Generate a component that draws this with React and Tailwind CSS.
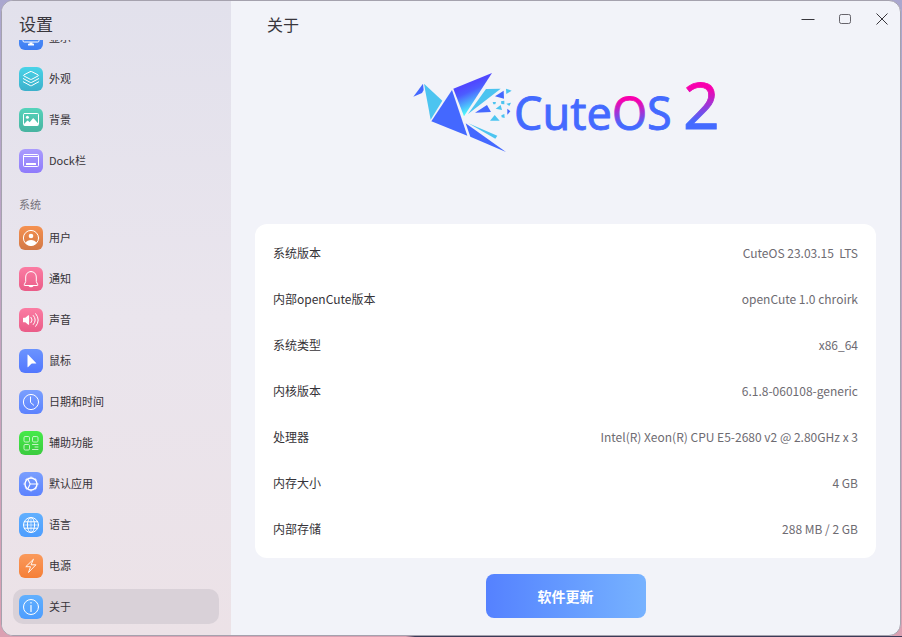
import React from "react";

const stroke = {
  fill: "none",
  stroke: "white",
  strokeWidth: 1,
  strokeLinecap: "round",
  strokeLinejoin: "round",
};

const glyphs = {
  display: (
    <g>
      <rect x="4" y="4" width="16" height="12" rx="1.2" {...stroke} />
      <path d="M10.5 16.5h3v1.3h1.5v1.6H9v-1.600h1.5z" fill="white" />
    </g>
  ),
  layers: (
    <g {...stroke}>
      <path d="M11.3 4.6 4.9 7.9q-.9.5 0 1l6.4 3.4q.7.4 1.4 0l6.4-3.4q.9-.5 0-1l-6.4-3.3q-.7-.4-1.4 0Z" />
      <path d="m4.3 11.6 7 3.8q.7.4 1.4 0l7-3.8" />
      <path d="m4.3 14.8 7 3.8q.7.4 1.4 0l7-3.8" />
    </g>
  ),
  picture: (
    <g>
      <rect x="4.5" y="5.5" width="15" height="12" rx="1" {...stroke} />
      <circle cx="8.4" cy="9.3" r="1.5" fill="white" />
      <path d="m5 16 3.2-3.2q.5-.5 1 0l1.4 1.5 3.2-3.7q.5-.5 1 0L19 15.3V17.5H5z" fill="white" />
    </g>
  ),
  dock: (
    <g>
      <rect x="4.5" y="5.5" width="15" height="12" rx="1" {...stroke} />
      <path d="M4.5 7.5h15" {...stroke} />
      <rect x="7" y="14" width="10" height="2" rx=".5" fill="white" />
    </g>
  ),
  user: (
    <g>
      <circle cx="12" cy="12" r="7.6" {...stroke} />
      <circle cx="12" cy="10" r="2.3" fill="white" />
      <path d="M6.2 17Q8.3 13.9 12 13.9T17.8 17Q15.5 19.500 12 19.500T6.2 17Z" fill="white" />
    </g>
  ),
  bell: (
    <g>
      <path d="M12 4.500C8.700 4.500 6.700 7 6.700 10v4.500L5.200 17.800q-.3.700.5.700h12.600q.8 0 .5-.7l-1.500-3.300V10c0-3-2-5.500-5.300-5.500Z" {...stroke} />
      <path d="M9.500 19h5q-.7 1.200-2.500 1.200T9.500 19Z" fill="white" />
    </g>
  ),
  sound: (
    <g>
      <path d="M4.500 9.800h1.800l3-2.500q.8-.5.800.5v8.400q0 1-.8.500l-3-2.500H4.500q-.5 0-.5-.5v-3.400q0-.5.500-.5Z" fill="white" />
      <path d="M12 9.300q2.400 2.700 0 5.400M14.300 7.500q4 4.500 0 9M16.700 5.700q5.200 6.300 0 12.600" {...stroke} />
    </g>
  ),
  cursor: <path d="M8.500 6v11.600q0 .9.700.3l2.900-2.900q.4-.4.900-.4h3.800q.9 0 .3-.6L9.200 5.700q-.7-.6-.7.300Z" fill="white" />,
  clock: (
    <g {...stroke}>
      <circle cx="12" cy="12" r="7.6" />
      <path d="M11.500 7v5.400l3.200 2.800" />
    </g>
  ),
  access: (
    <g {...stroke} opacity=".7">
      <rect x="5" y="5.500" width="5.500" height="5.500" rx="1.200" />
      <rect x="13.500" y="5.500" width="5.500" height="5.500" rx="1.200" />
      <rect x="5" y="13.500" width="5.500" height="5.500" rx="1.200" />
      <path d="M13.500 13.500H19M16 16h3M13.500 18.500H19" />
    </g>
  ),
  apps: (
    <g {...stroke}>
      <circle cx="12" cy="12" r="6" strokeWidth="1.4" />
      <circle cx="12" cy="12" r="6.900" strokeDasharray="2.400 3.020" strokeDashoffset="1.200" strokeWidth=".7" strokeLinecap="butt" />
      <path d="M9 7.500 11.200 12 9 16.500M11.500 12H18" strokeWidth="1.200" />
    </g>
  ),
  globe: (
    <g {...stroke}>
      <circle cx="12" cy="12" r="7.500" />
      <ellipse cx="12" cy="12" rx="3.600" ry="7.500" />
      <path d="M5.300 8.800h13.400M5.300 15.200h13.400" />
      <path d="M4.500 12h15M12 4.500v15" strokeWidth=".6" />
    </g>
  ),
  bolt: <path d="M14.200 5.500 6.800 12.700h4.700l-2 5.800 7.400-7.700h-4.500z" {...stroke} strokeWidth=".9" />,
  info: (
    <g {...stroke}>
      <circle cx="12" cy="12" r="7.500" />
      <path d="M12 10.500v6" strokeWidth="1.200" />
      <path d="M12 7.800v.1" strokeWidth="1.400" />
    </g>
  ),
};

const personal = [
  { label: "显示", icon: "display", tile: "from-[#5a9bfb] to-[#3d7cf2]" },
  { label: "外观", icon: "layers", tile: "from-[#49d3e8] to-[#3cb0cb]" },
  { label: "背景", icon: "picture", tile: "from-[#55d3bb] to-[#48b3a0]" },
  { label: "Dock栏", icon: "dock", tile: "from-[#aa9bfd] to-[#8f7bfb]" },
];

const system = [
  { label: "用户", icon: "user", tile: "from-[#f59150] to-[#d27846]" },
  { label: "通知", icon: "bell", tile: "from-[#fb7ca3] to-[#ea5c88]" },
  { label: "声音", icon: "sound", tile: "from-[#fb7ca3] to-[#ea5c88]" },
  { label: "鼠标", icon: "cursor", tile: "from-[#6b93fe] to-[#5277fe]" },
  { label: "日期和时间", icon: "clock", tile: "from-[#7a9ffe] to-[#5c82fe]" },
  { label: "辅助功能", icon: "access", tile: "from-[#46ea4a] to-[#3bcb3f]" },
  { label: "默认应用", icon: "apps", tile: "from-[#7a9ffe] to-[#5c82fe]" },
  { label: "语言", icon: "globe", tile: "from-[#62b0fe] to-[#4d9dfe]" },
  { label: "电源", icon: "bolt", tile: "from-[#fa9a5c] to-[#f57f36]" },
  { label: "关于", icon: "info", tile: "from-[#62b0fe] to-[#4d9dfe]", active: true },
];

const facts = [
  ["系统版本", "CuteOS 23.03.15  LTS"],
  ["内部openCute版本", "openCute 1.0 chroirk"],
  ["系统类型", "x86_64"],
  ["内核版本", "6.1.8-060108-generic"],
  ["处理器", "Intel(R) Xeon(R) CPU E5-2680 v2 @ 2.80GHz x 3"],
  ["内存大小", "4 GB"],
  ["内部存储", "288 MB / 2 GB"],
];

function NavItem({ label, icon, tile, active }) {
  return (
    <li className="shrink-0">
      <button
        type="button"
        aria-current={active ? "page" : undefined}
        className={
          "flex h-[35px] w-full items-center gap-1.5 rounded-[10px] px-1.5 text-left text-[11px] text-[#363338] " +
          (active ? "bg-[#d9d1d8]" : "")
        }
      >
        <span className={"size-6 shrink-0 rounded-md bg-linear-to-b " + tile}>
          <svg viewBox="0 0 24 24" className="size-6" aria-hidden="true">
            {glyphs[icon]}
          </svg>
        </span>
        {label}
      </button>
    </li>
  );
}

function Logo() {
  return (
    <svg viewBox="0 0 312 90" className="h-[90px] w-[312px] overflow-visible" role="img" aria-label="CuteOS 2">
      <defs>
        <linearGradient id="wing" gradientUnits="userSpaceOnUse" x1="205" y1="75" x2="237" y2="145">
          <stop offset="0" stopColor="#5048ff" />
          <stop offset=".25" stopColor="#4c5cff" />
          <stop offset="1" stopColor="#4dfbfb" />
        </linearGradient>
        <linearGradient id="letterO" gradientUnits="userSpaceOnUse" x1="0" y1="29" x2="0" y2="62">
          <stop offset=".1" stopColor="#f800ae" />
          <stop offset=".85" stopColor="#446aff" />
        </linearGradient>
        <linearGradient id="two" gradientUnits="userSpaceOnUse" x1="0" y1="13" x2="0" y2="61">
          <stop offset=".15" stopColor="#f800ae" />
          <stop offset=".85" stopColor="#446aff" />
        </linearGradient>
      </defs>
      <g transform="translate(-10 -8) scale(.33333)">
        <path d="M40 110 69 71 71 90 66 99Z" fill="#4468ff" />
        <path d="M72 71 127 122 92 179Z" fill="#4cc4f0" />
        <path d="M156 90 202 227 94 184Z" fill="#4468ff" />
        <path d="M160 86 276 39 192 169Z" fill="url(#wing)" />
        <path d="M258 87 302 86 204 162Z" fill="#4cc4f0" />
        <path d="M225 158 261 135 273 156Z" fill="#4468ff" />
        <path d="M197 190 211 230 318 276Z" fill="#4468ff" />
        <path d="M205 190 292 227 286 236Z" fill="#4cc4f0" />
        <path d="M285 109 311 92 312 116Z" fill="#4468ff" />
        <path d="M318 86 335 92 319 102Z" fill="#4cc4f0" />
        <path d="M270 182 284 165 299 182Z" fill="#4cc4f0" />
        <path d="M287 146 302 135 306 150ZM278 126h10l-2 7h-6ZM303 124l10-2v11l-9-1ZM319 131l14-3-5 10ZM304 166l9-4 1 12-9-2Z" fill="#4cc4f0" />
        <path d="M322 146 331 154 322 164Z" fill="#4468ff" />
      </g>
      <g fontFamily="'Noto Sans', 'Open Sans', sans-serif" strokeWidth=".8">
        <text x="104" y="62" fontSize="45" fill="#446aff" stroke="#446aff">
          Cute<tspan fill="url(#letterO)" stroke="url(#letterO)">O</tspan>S
        </text>
        <text x="273" y="61" fontSize="64" fill="url(#two)" stroke="url(#two)">2</text>
      </g>
    </svg>
  );
}

function WindowControls() {
  const button = "flex h-8 w-[37px] items-center justify-center";
  return (
    <div className="flex">
      <button type="button" aria-label="最小化" className={button}>
        <svg viewBox="0 0 14 14" className="size-3.5" fill="none" stroke="#38363c">
          <path d="M.5 7.500h13" />
        </svg>
      </button>
      <button type="button" aria-label="最大化" className={button}>
        <svg viewBox="0 0 14 14" className="size-3.5" fill="none" stroke="#66646b">
          <rect x="1.500" y="2.500" width="11" height="9" rx="1.800" />
        </svg>
      </button>
      <button type="button" aria-label="关闭" className={button}>
        <svg viewBox="0 0 14 14" className="size-3.5" fill="none" stroke="#38363c">
          <path d="m1.500 1.500 11 11M12.500 1.500l-11 11" />
        </svg>
      </button>
    </div>
  );
}

export default function App() {
  return (
    <div className="h-screen bg-[linear-gradient(to_right,transparent_45%,#3c3a58_46%),linear-gradient(to_bottom,#aaa7cf,#dba0b2)] bg-[size:100%_1px,100%_100%] bg-bottom bg-no-repeat p-px pt-0 font-['Noto_Sans_CJK_SC',sans-serif]">
      <div className="flex h-full overflow-hidden rounded-xl border border-[#a5a2ae] bg-[#f2f3f9]">
        <nav aria-label="设置" className="flex w-[229px] shrink-0 flex-col bg-linear-to-b from-[#e2e1ec] via-[#eae5ed] to-[#ece2e7] pr-3 pb-[11px] pl-[11px]">
          <h1 className="h-[39px] shrink-0 px-1.5 pt-[11px] text-[17px] leading-6 text-[#38363c]">设置</h1>
          <div className="flex min-h-0 flex-1 flex-col justify-end gap-1.5 overflow-hidden">
            <ul className="flex shrink-0 flex-col gap-1.5">
              {personal.map((item) => (
                <NavItem key={item.label} {...item} />
              ))}
            </ul>
            <h2 className="shrink-0 px-1.5 pt-[11px] pb-px text-[11px] leading-[18px] text-[#75717a]">系统</h2>
            <ul className="flex shrink-0 flex-col gap-1.5">
              {system.map((item) => (
                <NavItem key={item.label} {...item} />
              ))}
            </ul>
          </div>
        </nav>
        <main className="flex min-w-0 flex-1 flex-col px-6">
          <header className="-mr-6 flex shrink-0 items-start justify-between pt-0.5 pl-3">
            <h2 className="pt-[9px] text-[16px] leading-6 text-[#38363c]">关于</h2>
            <WindowControls />
          </header>
          <div className="flex shrink-0 justify-center pt-8 pb-[66px]">
            <Logo />
          </div>
          <dl className="shrink-0 rounded-xl bg-white px-[18px] py-1.5">
            {facts.map(([name, value]) => (
              <div key={name} className="flex h-[46px] items-center justify-between text-[12px]">
                <dt className="text-[#363338]">{name}</dt>
                <dd className="whitespace-pre text-[#6e6b72]">{value}</dd>
              </div>
            ))}
          </dl>
          <div className="flex justify-center pt-4">
            <button type="button" className="h-11 w-40 rounded-lg bg-linear-to-r from-[#5581ff] to-[#77b2ff] text-[14px] font-bold text-white">
              软件更新
            </button>
          </div>
        </main>
      </div>
    </div>
  );
}
